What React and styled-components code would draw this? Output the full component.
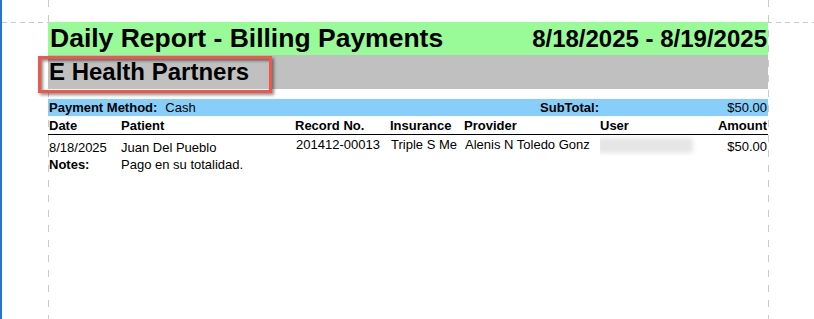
import React from 'react';
import styled, { createGlobalStyle } from 'styled-components';

const GlobalStyle = createGlobalStyle`
    html, body {
        margin: 0;
        background: #fff;
    }
    body {
        font-family: "Liberation Sans", Arial, sans-serif;
        color: #000;
    }
`;

const Canvas = styled.div`
    position: relative;
    height: 100vh;
    overflow: hidden;
    box-sizing: border-box;
    border-left: 2px solid #2176d2;
    padding: 22px 0 0 46px;
`;

const VGuide = styled.div`
    position: absolute;
    top: 0;
    bottom: 0;
    left: ${props => props.$x - 2}px;
    width: 1px;
    background: repeating-linear-gradient(to bottom, #cacaca 0 7px, transparent 7px 15px);
`;

const HGuide = styled.div`
    position: absolute;
    left: 0;
    right: 0;
    top: 22px;
    height: 1px;
    background: repeating-linear-gradient(to right, #cacaca 0 5px, transparent 5px 9px);
`;

const Sheet = styled.div`
    position: relative;
    z-index: 1;
    width: 720px;
`;

const TitleBar = styled.div`
    display: flex;
    justify-content: space-between;
    align-items: baseline;
    height: 33px;
    line-height: 33px;
    padding: 0 1px 0 2px;
    background: #98fb98;
    font-weight: bold;
    white-space: nowrap;

    h1 {
        margin: 0;
        font-size: 26.5px;
        font-weight: bold;
    }
    span {
        font-size: 24px;
    }
`;

const CompanyBar = styled.div`
    position: relative;
    height: 34px;
    line-height: 34px;
    padding-left: 1px;
    background: #c0c0c0;
    font-size: 24px;
    font-weight: bold;
    margin-bottom: 10px;
`;

const Highlight = styled.div`
    position: absolute;
    left: -10px;
    top: 1px;
    width: 234px;
    height: 37px;
    box-sizing: border-box;
    border: 3px solid #ef574a;
    box-shadow: 2px 2px 3px rgba(0, 0, 0, 0.45), inset 2px 2px 3px rgba(0, 0, 0, 0.45);
    pointer-events: none;
`;

const GroupBar = styled.div`
    display: grid;
    grid-template-columns: auto 1fr auto 168px;
    height: 17px;
    line-height: 17px;
    padding: 0 1px;
    background: #87cefa;
    font-size: 13px;
    white-space: nowrap;
`;

const Label = styled.span`
    font-weight: bold;
    margin-right: ${props => props.$gap || 0}px;
`;

const Value = styled.span`
    text-align: ${props => props.$align || 'left'};
`;

const Row = styled.div`
    display: grid;
    grid-template-columns: 72px 174px 95px 74px 136px 1fr auto;
    padding: 0 1px;
    font-size: 13px;
    line-height: 17px;
    white-space: nowrap;
    height: ${props => props.$height || 17}px;
    border-bottom: ${props => props.$rule ? '1px solid #000' : 'none'};
    font-weight: ${props => props.$head ? 'bold' : 'normal'};
`;

const Cell = styled.div`
    overflow: hidden;
    padding-top: ${props => props.$top || 0}px;
    padding-left: ${props => props.$indent || 0}px;
    text-align: ${props => props.$right ? 'right' : 'left'};
    font-weight: ${props => props.$bold ? 'bold' : 'inherit'};
    grid-column: ${props => props.$span || 'auto'};
`;

const Redacted = styled.div`
    width: 96px;
    height: 15px;
    margin: 3px 0 0 -3px;
    background: #e6e6e6;
    border-radius: 3px;
    filter: blur(2px);
`;

export default function App() {
    return (
        <>
            <GlobalStyle />
            <Canvas>
                <VGuide $x={48} />
                <VGuide $x={768} />
                <HGuide />
                <Sheet>
                    <TitleBar>
                        <h1>Daily Report - Billing Payments</h1>
                        <span>8/18/2025 - 8/19/2025</span>
                    </TitleBar>
                    <CompanyBar>
                        E Health Partners
                        <Highlight />
                    </CompanyBar>
                    <GroupBar>
                        <Label $gap={8}>Payment Method:</Label>
                        <Value>Cash</Value>
                        <Label>SubTotal:</Label>
                        <Value $align="right">$50.00</Value>
                    </GroupBar>
                    <Row $head $rule $height={18}>
                        <Cell $top={1}>Date</Cell>
                        <Cell $top={1}>Patient</Cell>
                        <Cell $top={1}>Record No.</Cell>
                        <Cell $top={1}>Insurance</Cell>
                        <Cell $top={1}>Provider</Cell>
                        <Cell $top={1}>User</Cell>
                        <Cell $top={1} $right>Amount</Cell>
                    </Row>
                    <Row $height={21}>
                        <Cell $top={4}>8/18/2025</Cell>
                        <Cell $top={4}>Juan Del Pueblo</Cell>
                        <Cell $top={1} $indent={1}>201412-00013</Cell>
                        <Cell $top={1} $indent={1}>Triple S Me</Cell>
                        <Cell $top={1} $indent={1}>Alenis N Toledo Gonz</Cell>
                        <Cell><Redacted /></Cell>
                        <Cell $top={3} $right>$50.00</Cell>
                    </Row>
                    <Row>
                        <Cell $bold>Notes:</Cell>
                        <Cell $span="2 / 7">Pago en su totalidad.</Cell>
                    </Row>
                </Sheet>
            </Canvas>
        </>
    );
}
